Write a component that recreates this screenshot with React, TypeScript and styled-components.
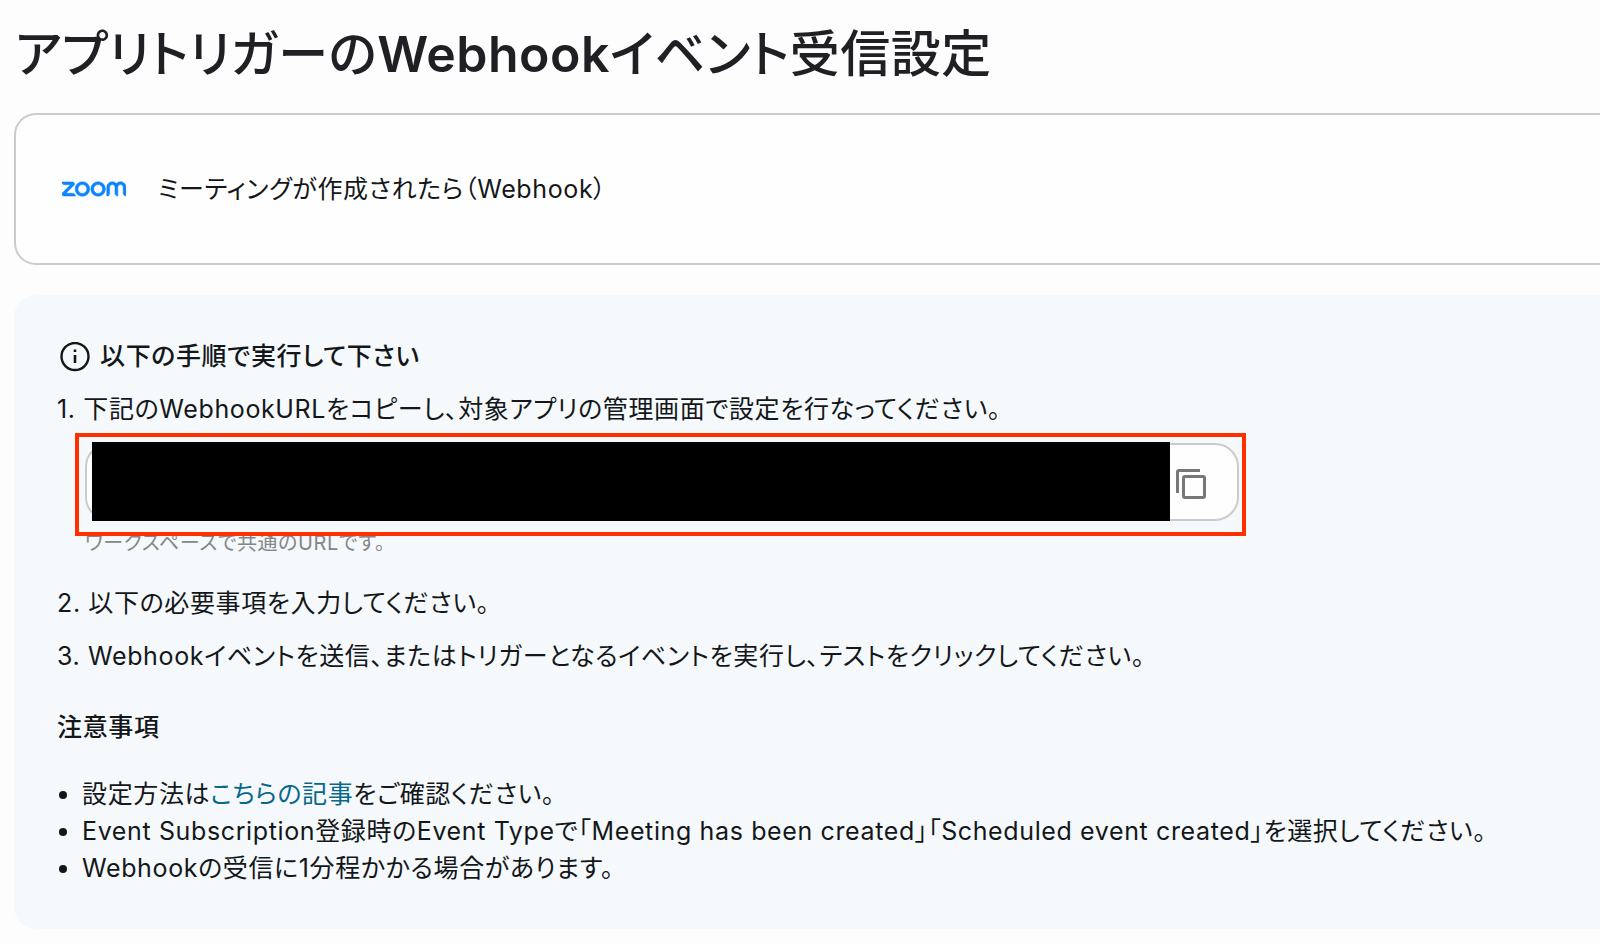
import React from "react";
import styled, { createGlobalStyle } from "styled-components";
import { SiZoom } from "react-icons/si";

const GlobalStyle = createGlobalStyle`
  *, *::before, *::after { box-sizing: border-box; }
  body {
    margin: 0;
    background: #fdfdfe;
    color: #14171a;
    font-family: Inter, "Noto Sans CJK JP", sans-serif;
    font-size: 25px;
    line-height: 37px;
    letter-spacing: 0.025em;
    font-feature-settings: "palt";
  }
`;

const Page = styled.main`
  display: flex;
  flex-direction: column;
  padding: 16px 0 14px 14px;
`;

const Title = styled.h1`
  margin: 0 0 21px 1px;
  font-size: 50px;
  line-height: 76px;
  font-weight: 500;
  letter-spacing: 0.01em;
  color: #201f24;
`;

const TitleTerm = styled.span`
  font-weight: 600;
`;

const TriggerCard = styled.section`
  display: flex;
  align-items: center;
  gap: 32px;
  height: 152px;
  padding: 0 46px;
  border: 2px solid #cbcbce;
  border-right: 0;
  border-radius: 22px 0 0 22px;
  background: #fefefe;
`;

const ZoomLogo = styled(SiZoom)`
  flex: none;
  width: 64px;
  height: 64px;
  color: #0b84ff;
  stroke: currentColor;
  stroke-width: 0.2;
`;

const Guide = styled.section`
  margin-top: 30px;
  padding: 43px 44px 42px 43px;
  border-radius: 22px 0 0 22px;
  background: #f5f9fc;
`;

const Heading = styled.h2`
  display: flex;
  align-items: center;
  gap: 10px;
  margin: 0 0 16px;
  font-size: 25px;
  line-height: 37px;
  font-weight: 500;
`;

const InfoIcon = styled.svg`
  width: 30px;
  height: 30px;
  margin-left: 3px;
`;

const Steps = styled.ol`
  display: flex;
  flex-direction: column;
  gap: 16px;
  margin: 0 0 34px;
  padding: 0;
  list-style: none;
  counter-reset: step;
`;

const Step = styled.li`
  counter-increment: step;
  &::before { content: counter(step) ". "; }
`;

const UrlBlock = styled.div`
  position: relative;
  max-width: 1154px;
  margin: 15px 0 11px 28px;
`;

const UrlField = styled.div`
  display: flex;
  align-items: flex-end;
  height: 78px;
  padding-left: 5px;
  border: 2px solid #cbcbce;
  border-radius: 24px;
  background: #fefefe;
`;

const UrlInput = styled.input`
  flex: 1;
  min-width: 0;
  height: 79px;
  margin-bottom: -2px;
  padding: 0 20px;
  border: 0;
  border-radius: 0;
  background: #000;
  color: #000;
  font: inherit;
`;

const CopyButton = styled.button`
  display: flex;
  align-items: center;
  align-self: flex-end;
  width: 67px;
  height: 70px;
  padding: 0 0 0 6px;
  border: 0;
  background: none;
  color: #777;
`;

const Highlight = styled.div`
  position: absolute;
  inset: -10px -7px auto -10px;
  height: 103px;
  border: 4px solid #ff3000;
  pointer-events: none;
`;

const Hint = styled.p`
  margin: 7px 0 0;
  font-size: 20px;
  line-height: 30px;
  color: #85858a;
`;

const Notes = styled.ul`
  margin: 0;
  padding: 0 0 0 25px;
  list-style: none;
`;

const Note = styled.li`
  display: flex;
  align-items: center;
  &::before {
    content: "";
    width: 8px;
    height: 8px;
    margin: 0 15px 0 -23px;
    border-radius: 50%;
    background: currentColor;
  }
`;

const NotesHeading = styled(Heading)`
  margin-bottom: 30px;
`;

const ArticleLink = styled.a`
  color: #06688c;
  text-decoration: none;
`;

export default function App() {
  return (
    <>
      <GlobalStyle />
      <Page lang="ja">
        <Title>
          アプリトリガーの<TitleTerm>Webhook</TitleTerm>イベント受信設定
        </Title>
        <TriggerCard>
          <ZoomLogo role="img" aria-label="zoom" />
          <span>ミーティングが作成されたら（Webhook）</span>
        </TriggerCard>
        <Guide>
          <Heading>
            <InfoIcon viewBox="0 0 30 30" aria-hidden="true">
              <circle cx="15" cy="14.5" r="13.5" fill="none" stroke="currentColor" strokeWidth="2.4" />
              <path d="M15 13V21M15 7.5V10" stroke="currentColor" strokeWidth="2.6" />
            </InfoIcon>
            以下の手順で実行して下さい
          </Heading>
          <Steps>
            <Step>
              下記のWebhookURLをコピーし、対象アプリの管理画面で設定を行なってください。
              <UrlBlock>
                <UrlField>
                  <UrlInput type="text" readOnly aria-label="WebhookURL" />
                  <CopyButton type="button" aria-label="コピー">
                    <svg width="30" height="30" viewBox="0 0 30 30" fill="none" stroke="currentColor" strokeWidth="3" aria-hidden="true">
                      <path d="M1.5 24V3Q1.5 1.5 3 1.5H24" />
                      <rect x="7.5" y="7.5" width="21" height="21" rx="1.5" />
                    </svg>
                  </CopyButton>
                </UrlField>
                <Hint>ワークスペースで共通のURLです。</Hint>
                <Highlight />
              </UrlBlock>
            </Step>
            <Step>以下の必要事項を入力してください。</Step>
            <Step>Webhookイベントを送信、またはトリガーとなるイベントを実行し、テストをクリックしてください。</Step>
          </Steps>
          <NotesHeading>注意事項</NotesHeading>
          <Notes>
            <Note>
              <span>
                設定方法は<ArticleLink href="#article">こちらの記事</ArticleLink>をご確認ください。
              </span>
            </Note>
            <Note>Event Subscription登録時のEvent Typeで「Meeting has been created」「Scheduled event created」を選択してください。</Note>
            <Note>Webhookの受信に1分程かかる場合があります。</Note>
          </Notes>
        </Guide>
      </Page>
    </>
  );
}
